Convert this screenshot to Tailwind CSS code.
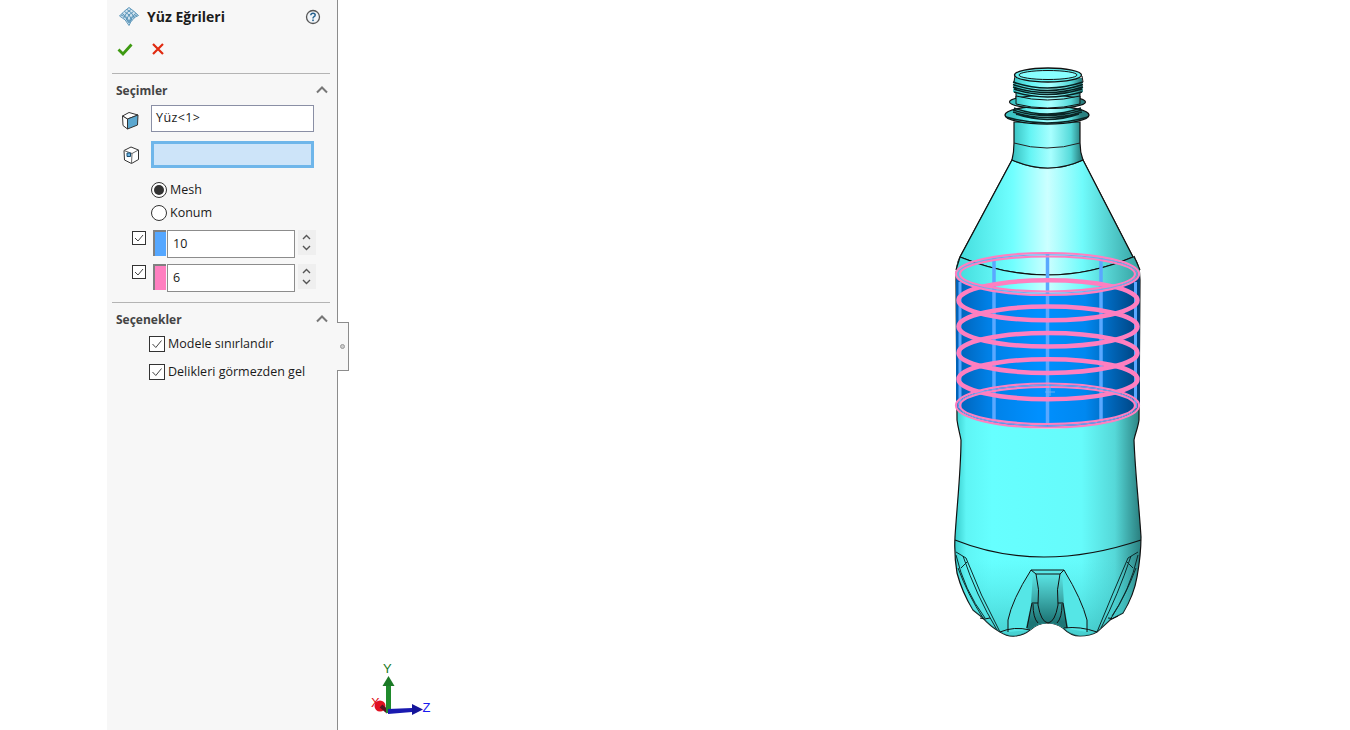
<!DOCTYPE html>
<html lang="en">

<head>
    <meta charset="UTF-8">
    <meta name="viewport" content="width=device-width, initial-scale=1.0">
    <script src="https://cdn.jsdelivr.net/npm/@tailwindcss/browser@4"></script>
    <title>Yüz Eğrileri</title>
</head>

<body class="flex h-[730px] w-[1350px] overflow-hidden bg-white font-['Open_Sans','Noto_Sans',sans-serif] text-[12.5px] text-[#1a1a1a]">
    <div class="w-[107px] shrink-0"></div>

    <!-- property manager -->
    <aside class="relative w-[231px] shrink-0 border-r border-[#8c8c8c] bg-[#f7f7f7]">
        <div class="flex h-[33px] items-center pl-[12px] pr-[16px]">
            <svg class="h-[19px] w-[20px]" viewBox="0 0 20 19" fill="none" stroke="#4f8db3" stroke-width="0.9">
                <path d="M0.5 9 Q5 4 10 0.500 Q15 4 19.500 8.500 Q13 11 10 18.500 Q7 12 0.500 9Z" fill="#cfe2ee" />
                <path d="M3 6.500 Q8 9 10.500 16M5.500 4.500 Q11 7 13 13.500M8 2.500 Q13 5 15.500 11M2 8 Q8 10 9 15" />
                <path d="M17 6.500 Q12 9 9.500 16M14.500 4.500 Q9 7 7 13.500M12 2.500 Q7 5 4.500 11M18 8 Q12 10 11 15" />
            </svg>
            <h1 class="ml-[8px] flex-1 text-[14px] font-bold text-[#1c1c1c]">Yüz Eğrileri</h1>
            <svg class="h-[16px] w-[16px]" viewBox="0 0 16 16" fill="none">
                <circle cx="8" cy="8" r="6.500" fill="#f0f4f8" stroke="#555" stroke-width="1.300" />
                <path d="M5.800 6.200 Q6 4.200 8 4.200 Q10.200 4.200 10.200 6 Q10.200 7.200 8.800 7.800 Q8 8.200 8 9.500" stroke="#24618f" stroke-width="1.500" />
                <rect x="7.200" y="10.500" width="1.600" height="1.600" fill="#24618f" />
            </svg>
        </div>

        <div class="flex h-[31px] items-center gap-[17px] pl-[10px]">
            <svg class="h-[16px] w-[16px]" viewBox="0 0 16 16" fill="none">
                <path d="M1.500 8.500 L6 13 L14.500 3.500" stroke="#3e9a12" stroke-width="2.800" />
            </svg>
            <svg class="h-[16px] w-[16px]" viewBox="0 0 16 16" fill="none">
                <path d="M3 3 L13 13 M13 3 L3 13" stroke="#e02a10" stroke-width="2.200" />
            </svg>
        </div>

        <section class="mx-[5px] mt-[9px] w-[218px] border-t border-[#b4b4b4] pt-[8px]">
            <div class="flex h-[18px] items-center justify-between pl-[4px] pr-[2px]">
                <h2 class="text-[12px] font-bold text-[#444]">Seçimler</h2>
                <svg class="mb-[2px] h-[8px] w-[12px]" viewBox="0 0 12 8" fill="none"><path d="M1 6.500 L6 1.500 L11 6.500" stroke="#777" stroke-width="2" /></svg>
            </div>

            <div class="mt-[5px] flex items-center gap-[12px] pl-[9px]">
                <svg class="mt-[3px] h-[20px] w-[18px]" viewBox="0 0 18 20" stroke="#333" stroke-width="1" stroke-linejoin="round">
                    <path d="M1.500 6 L8 2.500 L17 5 L6.500 9Z" fill="#fff" />
                    <path d="M1.500 6 L6.500 9 L6.500 19 L2 15.500Z" fill="#fff" />
                    <path d="M6.500 9 L17 5 L16.500 15 L6.500 19Z" fill="#5ba7cf" />
                </svg>
                <div class="flex h-[27px] w-[163px] items-center border border-[#8a8fa5] bg-white pb-[1px] pl-[4px] tracking-[0.4px]">Yüz&lt;1&gt;</div>
            </div>

            <div class="mt-[9px] flex items-center gap-[12px] pl-[9px]">
                <svg class="ml-[1px] mr-[-1px] h-[20px] w-[18px]" viewBox="0 0 18 20" stroke="#333" stroke-width="1" stroke-linejoin="round">
                    <path d="M2 5.500 L9 2 L16.500 5 L16.500 14.500 L9.500 18.500 L2.500 15Z" fill="#fff" />
                    <path d="M2 5.500 L10 8.500 L16.500 5 M10 8.500 L9.500 18.500" fill="none" stroke="#666" />
                    <rect x="5" y="8" width="3.500" height="3.500" fill="#6db6e6" stroke="#1d4e70" />
                </svg>
                <div class="h-[27px] w-[163px] border-[3px] border-[#6fb6ea] bg-[#cde4f9]"></div>
            </div>

            <div class="mt-[14px] flex flex-col gap-[7px] pl-[39px]">
                <label class="flex h-[16px] items-center gap-[3px]">
                    <span class="flex h-[16px] w-[16px] items-center justify-center rounded-full border border-[#333] bg-white"><span class="h-[10px] w-[10px] rounded-full bg-[#333]"></span></span>
                    Mesh
                </label>
                <label class="flex h-[16px] items-center gap-[3px]">
                    <span class="h-[16px] w-[16px] rounded-full border border-[#333] bg-white"></span>
                    Konum
                </label>
            </div>

            <div class="mt-[9px] flex h-[28px] items-start pl-[20px]">
                <span class="mt-[1px] flex h-[14px] w-[14px] items-center justify-center border border-[#333] bg-white">
                    <svg class="h-[10px] w-[10px]" viewBox="0 0 10 10" fill="none"><path d="M1 5 L4 8 L9 2" stroke="#444" /></svg>
                </span>
                <span class="ml-[7px] h-[26px] w-[13px] border-t-2 border-l-2 border-[#808080] bg-[#55a7ff]"></span>
                <div class="ml-[1px] flex h-[28px] w-[128px] items-center border border-[#8c8c8c] bg-white pl-[5px]">10</div>
                <div class="ml-[3px] flex h-[25px] w-[18px] flex-col items-center justify-center gap-[5px] bg-[#efefef] pr-[2px]">
                    <svg class="h-[6px] w-[9px]" viewBox="0 0 9 6" fill="none"><path d="M1 5 L4.500 1.500 L8 5" stroke="#555" stroke-width="1.400" /></svg>
                    <svg class="h-[6px] w-[9px]" viewBox="0 0 9 6" fill="none"><path d="M1 1 L4.500 4.500 L8 1" stroke="#555" stroke-width="1.400" /></svg>
                </div>
            </div>

            <div class="mt-[6px] flex h-[28px] items-start pl-[20px]">
                <span class="mt-[1px] flex h-[14px] w-[14px] items-center justify-center border border-[#333] bg-white">
                    <svg class="h-[10px] w-[10px]" viewBox="0 0 10 10" fill="none"><path d="M1 5 L4 8 L9 2" stroke="#444" /></svg>
                </span>
                <span class="ml-[7px] h-[26px] w-[13px] border-t-2 border-l-2 border-[#808080] bg-[#ff7fc0]"></span>
                <div class="ml-[1px] flex h-[28px] w-[128px] items-center border border-[#8c8c8c] bg-white pl-[5px]">6</div>
                <div class="ml-[3px] flex h-[25px] w-[18px] flex-col items-center justify-center gap-[5px] bg-[#efefef] pr-[2px]">
                    <svg class="h-[6px] w-[9px]" viewBox="0 0 9 6" fill="none"><path d="M1 5 L4.500 1.500 L8 5" stroke="#555" stroke-width="1.400" /></svg>
                    <svg class="h-[6px] w-[9px]" viewBox="0 0 9 6" fill="none"><path d="M1 1 L4.500 4.500 L8 1" stroke="#555" stroke-width="1.400" /></svg>
                </div>
            </div>
        </section>

        <section class="mx-[5px] mt-[10px] w-[218px] border-t border-[#b4b4b4] pt-[8px]">
            <div class="flex h-[18px] items-center justify-between pl-[4px] pr-[2px]">
                <h2 class="text-[12px] font-bold text-[#444]">Seçenekler</h2>
                <svg class="mb-[2px] h-[8px] w-[12px]" viewBox="0 0 12 8" fill="none"><path d="M1 6.500 L6 1.500 L11 6.500" stroke="#777" stroke-width="2" /></svg>
            </div>
            <div class="mt-[7px] flex flex-col gap-[12px] pl-[37px]">
                <label class="flex h-[16px] items-center gap-[3px]">
                    <span class="flex h-[16px] w-[16px] items-center justify-center border border-[#333] bg-white">
                        <svg class="h-[12px] w-[12px]" viewBox="0 0 12 12" fill="none"><path d="M1.500 6 L4.800 9.500 L10.500 2.500" stroke="#444" /></svg>
                    </span>
                    <span class="mt-[1px]">Modele sınırlandır</span>
                </label>
                <label class="flex h-[16px] items-center gap-[3px]">
                    <span class="flex h-[16px] w-[16px] items-center justify-center border border-[#333] bg-white">
                        <svg class="h-[12px] w-[12px]" viewBox="0 0 12 12" fill="none"><path d="M1.500 6 L4.800 9.500 L10.500 2.500" stroke="#444" /></svg>
                    </span>
                    <span class="mt-[1px]">Delikleri görmezden gel</span>
                </label>
            </div>
        </section>

        <!-- collapse tab -->
        <div class="absolute left-[230px] top-[322px] flex h-[49px] w-[12px] items-center justify-center border-y border-r border-[#8c8c8c] bg-[#f7f7f7]">
            <span class="h-[5px] w-[5px] rounded-full border border-[#999] bg-[#ccc]"></span>
        </div>
    </aside>

    <!-- graphics area -->
    <main class="flex-1">
        <svg class="block h-[730px] w-[1012px]" viewBox="338 0 1012 730" fill="none">
            <defs>
                <linearGradient id="body" gradientUnits="userSpaceOnUse" x1="955" x2="1141" y1="0" y2="0">
                    <stop offset="0" stop-color="#38cccc" />
                    <stop offset="0.06" stop-color="#5ff5f5" />
                    <stop offset="0.2" stop-color="#66ffff" />
                    <stop offset="0.68" stop-color="#66fbfb" />
                    <stop offset="0.86" stop-color="#55d8d8" />
                    <stop offset="1" stop-color="#2a7e7e" />
                </linearGradient>
                <linearGradient id="cone" gradientUnits="userSpaceOnUse" x1="960" x2="1135" y1="0" y2="0">
                    <stop offset="0" stop-color="#45dede" />
                    <stop offset="0.3" stop-color="#70ffff" />
                    <stop offset="0.5" stop-color="#ccffff" />
                    <stop offset="0.7" stop-color="#70fbfb" />
                    <stop offset="1" stop-color="#3aa8a8" />
                </linearGradient>
                <linearGradient id="neck" gradientUnits="userSpaceOnUse" x1="1014" x2="1081" y1="0" y2="0">
                    <stop offset="0" stop-color="#3cc4c4" />
                    <stop offset="0.25" stop-color="#66f5f5" />
                    <stop offset="0.55" stop-color="#a8ffff" />
                    <stop offset="0.85" stop-color="#55dada" />
                    <stop offset="1" stop-color="#2a8080" />
                </linearGradient>
                <linearGradient id="face" gradientUnits="userSpaceOnUse" x1="955" x2="1141" y1="0" y2="0">
                    <stop offset="0" stop-color="#0060b4" />
                    <stop offset="0.18" stop-color="#0080e6" />
                    <stop offset="0.45" stop-color="#0090ff" />
                    <stop offset="0.7" stop-color="#0088f0" />
                    <stop offset="0.92" stop-color="#005299" />
                    <stop offset="1" stop-color="#003e75" />
                </linearGradient>
                <linearGradient id="notch" gradientUnits="userSpaceOnUse" x1="0" x2="0" y1="572" y2="622">
                    <stop offset="0" stop-color="#5ce8e8" />
                    <stop offset="0.5" stop-color="#3fb0b0" />
                    <stop offset="1" stop-color="#1d7676" />
                </linearGradient>
                <linearGradient id="foot" gradientUnits="userSpaceOnUse" x1="0" x2="0" y1="560" y2="636">
                    <stop offset="0" stop-color="#40d0d0" stop-opacity="0" />
                    <stop offset="1" stop-color="#30b0b0" stop-opacity="0.6" />
                </linearGradient>
            </defs>

            <!-- bottle body -->
            <path id="hull" d="M1012 160 L960 257 Q956 264 956 280 L957 420 C958 428 960 434 961 440 C961 470 957 505 955 537 Q954 555 957 573 Q962 592 973 610 L983 618 Q990 626 1000 632 Q1008 637 1015 636 Q1024 635 1030 630 Q1038 623 1047 623 Q1056 623 1063 628 Q1071 636 1080 636 Q1090 636 1097 632 L1110 620 L1123 613 Q1134 595 1137 577 Q1141 555 1141 537 C1139 505 1135 470 1134 440 C1135 434 1138 428 1139 420 L1140 280 Q1140 264 1133 257 L1083 160 Z" fill="url(#body)" stroke="#111" stroke-width="1.200" />
            <path d="M957 560 Q962 592 973 610 L983 618 Q990 626 1000 632 Q1008 637 1015 636 Q1024 635 1030 630 Q1038 623 1047 623 Q1056 623 1063 628 Q1071 636 1080 636 Q1090 636 1097 632 L1110 620 L1123 613 Q1134 595 1139 560 Z" fill="url(#foot)" />
            <path d="M1012 160 L960 257 Q1048 293 1133 257 L1083 160 Q1048 176 1012 160Z" fill="url(#cone)" stroke="#111" stroke-width="1.200" />
            <path d="M960 257 Q957 262 956 270 L956 408 Q1048 450 1140 408 L1140 270 Q1138 262 1133 257 Q1048 293 960 257Z" fill="url(#cone)" />

            <!-- selected face -->
            <path d="M956 274 A92 21 0 0 0 1140 274 L1140 408 C1128 420 1090 428 1048 428 C1006 428 968 420 956 408Z" fill="url(#face)" />
            <path d="M960 257 Q1048 293 1133 257" stroke="#111" stroke-width="1.200" />
            <path d="M1134 256 L1140 270 M960 257 L956 270" stroke="#111" stroke-width="1.200" />

            <!-- neck -->
            <path d="M1014 122 L1014 143 Q1014 152 1012 160 Q1048 176 1083 160 Q1080 152 1080 143 L1080 122Z" fill="url(#neck)" stroke="#111" stroke-width="1.200" />
            <path d="M1014 143 Q1047 153 1080 143" stroke="#222" />
            <ellipse cx="1047" cy="115" rx="42" ry="9" fill="url(#neck)" stroke="#111" stroke-width="1.400" />
            <path d="M1006 117 Q1047 129 1088 117 M1014 108 Q1047 120 1081 108 M1013 110 Q1047 121 1082 110 M1013 112 Q1047 123 1082 112 M1016 114 Q1047 125 1079 114" stroke="#0a2525" stroke-width="1.400" />
            <path d="M1016 90 L1016 102 Q1047 112 1080 102 L1080 90Z" fill="url(#neck)" stroke="#111" />
            <ellipse cx="1047.500" cy="102" rx="38" ry="6.500" fill="url(#neck)" stroke="#111" stroke-width="1.200" />
            <path d="M1016 96 L1016 104 Q1047 112 1080 104 L1080 96 Q1047 104 1016 96Z" fill="url(#neck)" stroke="#111" />
            <path d="M1014 78 L1013 92 Q1048 103 1083 92 L1082 78Z" fill="url(#neck)" />
            <path d="M1013 82 Q1047 94 1083 82 M1013 84.500 Q1047 96.500 1083 84.500 M1013 87 Q1047 98 1083 87 M1014 89 Q1047 100 1082 89 M1014 92 Q1047 102 1082 92" stroke="#062020" stroke-width="1.400" />
            <ellipse cx="1048" cy="75" rx="33.500" ry="7" fill="#66f2f2" stroke="#111" stroke-width="1.300" />
            <ellipse cx="1048" cy="75" rx="29" ry="4.500" fill="#88ffff" stroke="#111" />
            <path d="M1015 76 L1014 82 M1082 76 L1083 82" stroke="#111" />

            <!-- base -->
            <path d="M955 540 Q1040 574 1141 540" stroke="#111" stroke-width="1.200" />
            <path d="M1031 570 L1064 570 Q1075 595 1087 620 L1087 632 L1063 628 Q1056 623 1047 623 Q1038 623 1030 630 L1008 632 L1008 620 Q1018 590 1031 570Z" fill="#55e6e6" />
            <path d="M1031 604 L1033 572 L1062 572 L1064 604 L1068 628 L1063 628 Q1056 623 1047 623 Q1038 623 1030 630 L1026 628Z" fill="url(#notch)" />
            <path d="M1031 570 L1064 570 M1031 570 Q1012 600 1008 620 L1008 632 M1064 570 Q1082 600 1087 620 L1087 632 M1031 570 L1036 574 L1060 574 L1064 570 M1036 574 Q1040 590 1038 605 Q1041 622 1048 623 Q1055 622 1058 605 Q1056 590 1060 574 M1032 603 L1027 628 M1063 603 L1067 628 M1032 603 L1038 603 M1058 603 L1063 603 M1033 604 Q1033 618 1038 623 M1062 604 Q1062 618 1057 623" stroke="#111" stroke-width="1" />
            <path d="M956 552 L966 558 Q980 595 1000 632 M956 555 Q964 590 985 618 M963 556 Q976 595 997 630 M967 562 L961 568 M958 568 Q968 595 983 618 M1138 552 L1128 558 Q1112 595 1097 632 M1138 555 Q1130 590 1110 620 M1131 556 Q1118 595 1101 628 M1127 562 L1133 568 M1136 568 Q1126 595 1112 616" stroke="#0d2b2b" stroke-width="1" />
            <path d="M980 618 Q984 620 990 618 M1108 618 Q1112 620 1118 616 M1000 632 Q1014 626 1030 630 M1064 628 Q1080 626 1097 632" stroke="#111" stroke-width="1" />

            <!-- mesh lines -->
            <g stroke="#5aa8ff" stroke-width="3.500">
                <path d="M994 258 L994 420 M1047.500 253 L1047.500 425 M1101 258 L1101 420" />
                <path d="M960 282 L960 408 M1135.500 282 L1135.500 408" stroke-width="3" />
            </g>
            <g stroke="#ff7fc0" stroke-width="4.500">
                <ellipse cx="1048" cy="300.300" rx="89.500" ry="20" />
                <ellipse cx="1048" cy="326.600" rx="89.500" ry="20" />
                <ellipse cx="1048" cy="352.900" rx="89.500" ry="20" />
                <ellipse cx="1048" cy="379.200" rx="89.500" ry="20" />
            </g>
            <g stroke="#ff7fc0" stroke-width="2.200">
                <ellipse cx="1047.500" cy="274" rx="91.500" ry="21" />
                <ellipse cx="1047.500" cy="274" rx="87.500" ry="17.500" />
                <ellipse cx="1047.500" cy="405.500" rx="91.500" ry="22" />
                <ellipse cx="1047.500" cy="405.500" rx="87.500" ry="18.500" />
            </g>
            <g stroke="#7aa5ee" stroke-width="1">
                <ellipse cx="1047.500" cy="274" rx="89.500" ry="19.300" />
                <ellipse cx="1047.500" cy="405.500" rx="89.500" ry="20.300" />
            </g>
            <path d="M1045 392 L1055 392 M1050 386 L1050 396" stroke="#6db0f0" />

            <!-- triad -->
            <circle cx="380" cy="706" r="5.500" fill="#e01020" />
            <path d="M381 706 L388 712" stroke="#5a1020" stroke-width="4" />
            <path d="M386 686 L391 686 L391 713 L386 713Z" fill="#1f8a2c" />
            <path d="M388.500 676 L394.500 686 L382.500 686Z" fill="#1b7a26" />
            <path d="M388 709 L412 708 L412 712 L388 714Z" fill="#1a1ab0" />
            <path d="M423 709.500 L412 704 L412 715Z" fill="#14149a" />
            <text x="383" y="673" font-family="Liberation Sans" font-size="13" fill="#1b7a26">Y</text>
            <text x="422.500" y="712" font-family="Liberation Sans" font-size="13" fill="#1a1af0">Z</text>
            <text x="371" y="707" font-family="Liberation Sans" font-size="13" fill="#e01020">X</text>
        </svg>
    </main>
</body>

</html>
